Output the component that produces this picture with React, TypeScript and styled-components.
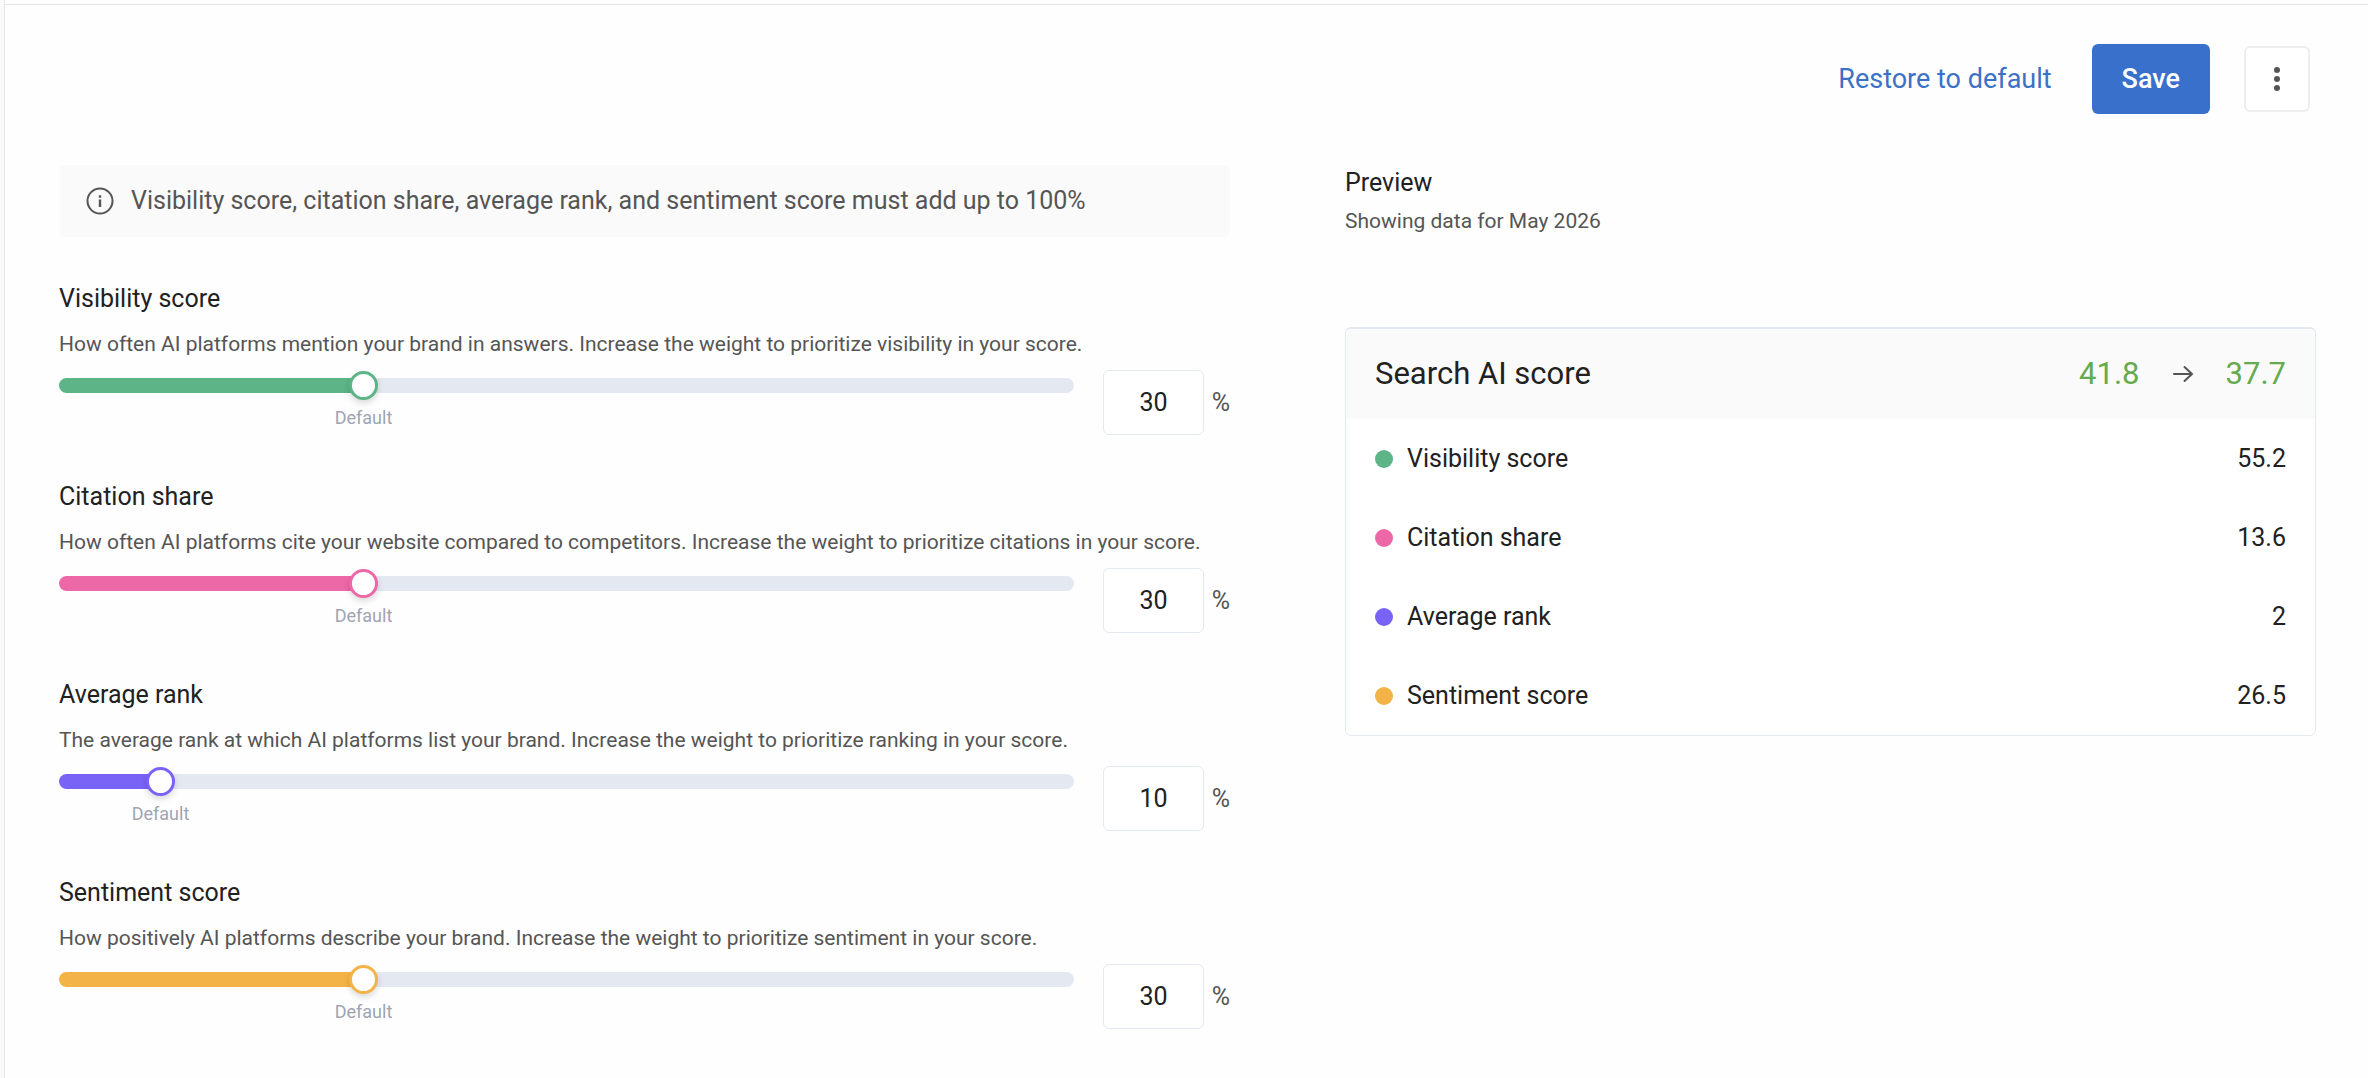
import React, { useState } from "react";
import styled, { createGlobalStyle } from "styled-components";

const GlobalStyle = createGlobalStyle`
  * { box-sizing: border-box; }
  body {
    margin: 0;
    background: #fefefe;
    color: #212121;
    font-family: Roboto, "Liberation Sans", sans-serif;
    font-size: 25px;
    line-height: 32px;
  }
  h1, h2, p, dl, dt, dd { margin: 0; font-weight: 400; }
  button, input { font: inherit; }
`;

const Page = styled.div`
  display: flex;
  flex-direction: column;
  min-height: 100vh;
  border-left: 4px solid #fafafa;
`;

const TopEdge = styled.div`
  height: 5px;
  border-left: 1px solid #e5e5e5;
  border-bottom: 1px solid #e5e5e5;
`;

const Main = styled.main`
  flex: 1;
  border-left: 1px solid #e5e5e5;
  padding: 39px 52px 24px 54px;
`;

const Toolbar = styled.div`
  display: flex;
  align-items: center;
  justify-content: flex-end;
  margin-bottom: 51px;
  padding-right: 6px;
`;

const TextButton = styled.button`
  margin-right: 40px;
  padding: 0;
  border: 0;
  background: none;
  color: #3b71c6;
  font-size: 27px;
  cursor: pointer;
`;

const SaveButton = styled.button`
  height: 70px;
  margin-right: 34px;
  padding: 0 30px;
  border: 0;
  border-radius: 6px;
  background: #3870cb;
  color: #fff;
  font-size: 27px;
  font-weight: 500;
  cursor: pointer;
`;

const MoreButton = styled.button`
  display: grid;
  place-items: center;
  width: 66px;
  height: 66px;
  padding: 0;
  border: 2px solid #eeeeee;
  border-radius: 6px;
  background: #fff;
  cursor: pointer;
`;

const Columns = styled.div`
  display: grid;
  grid-template-columns: 1171fr 971fr;
  gap: 115px;
  align-items: start;
`;

const Notice = styled.p`
  display: flex;
  align-items: center;
  gap: 17px;
  height: 72px;
  margin-bottom: 46px;
  padding: 0 27px;
  border-radius: 6px;
  background: #fafafa;
  color: #555;
`;

const WeightList = styled.div`
  display: grid;
  gap: 46px;
`;

const WeightTitle = styled.h2`
  font-size: 25px;
  line-height: 32px;
  margin-bottom: 15px;
`;

const Muted = styled.p`
  color: #555;
  font-size: 21px;
  line-height: 28px;
`;

const ControlRow = styled.div`
  display: flex;
  align-items: flex-start;
  margin-top: 12px;
`;

const SliderBox = styled.div`
  flex: 1;
  min-width: 0;
`;

const Track = styled.div<{ $color: string; $value: number }>`
  display: flex;
  align-items: center;
  height: 15px;
  margin: 8px 0;
  border-radius: 8px;
  background: linear-gradient(
    to right,
    ${(p) => p.$color} ${(p) => p.$value}%,
    #e4e8f1 ${(p) => p.$value}%
  );
`;

const Range = styled.input<{ $color: string }>`
  appearance: none;
  flex: none;
  width: calc(100% + 28px);
  height: 29px;
  margin: 0 -14px;
  background: transparent;
  cursor: pointer;

  &::-webkit-slider-thumb {
    appearance: none;
    box-sizing: border-box;
    width: 29px;
    height: 29px;
    border: 3px solid ${(p) => p.$color};
    border-radius: 50%;
    background: #fff;
    box-shadow: 0 3px 6px rgba(0, 0, 0, 0.15);
  }
`;

const DefaultMark = styled.div<{ $at: number }>`
  width: fit-content;
  margin-left: ${(p) => p.$at}%;
  transform: translateX(-50%);
  color: #9fa4b3;
  font-size: 18px;
  line-height: 34px;
`;

const NumberBox = styled.input`
  width: 101px;
  height: 65px;
  margin-left: 29px;
  padding: 0;
  border: 1px solid #e4e8f1;
  border-radius: 6px;
  background: #fff;
  color: #212121;
  font-size: 25px;
  text-align: center;
`;

const Percent = styled.span`
  width: 26px;
  color: #555;
  line-height: 65px;
  text-align: right;
`;

const PreviewTitle = styled.h2`
  font-size: 25px;
  line-height: 32px;
  margin: 2px 0 8px;
`;

const Card = styled.section`
  margin-top: 92px;
  border: 1px solid #e4e8f1;
  border-top-width: 2px;
  border-radius: 6px;
  overflow: hidden;
  background: #fff;
`;

const CardHeader = styled.div`
  display: flex;
  align-items: center;
  height: 90px;
  padding: 0 29px;
  background: #fafafa;
  font-size: 31px;
  line-height: 40px;
`;

const CardTitle = styled.h2`
  flex: 1;
  font-size: 31px;
`;

const Score = styled.span`
  color: #63ab4d;
`;

const ArrowIcon = styled.svg`
  margin: 0 32px;
`;

const ScoreRow = styled.div`
  display: flex;
  align-items: center;
  height: 79px;
  padding: 0 29px;
`;

const Dot = styled.span<{ $color: string }>`
  width: 18px;
  height: 18px;
  margin-right: 14px;
  border-radius: 50%;
  background: ${(p) => p.$color};
`;

const ScoreLabel = styled.dt`
  display: flex;
  align-items: center;
  flex: 1;
`;

const metrics = [
  {
    id: "visibility",
    name: "Visibility score",
    color: "#5cb487",
    weight: 30,
    score: "55.2",
    text: "How often AI platforms mention your brand in answers. Increase the weight to prioritize visibility in your score.",
  },
  {
    id: "citation",
    name: "Citation share",
    color: "#ed68a7",
    weight: 30,
    score: "13.6",
    text: "How often AI platforms cite your website compared to competitors. Increase the weight to prioritize citations in your score.",
  },
  {
    id: "rank",
    name: "Average rank",
    color: "#7963f7",
    weight: 10,
    score: "2",
    text: "The average rank at which AI platforms list your brand. Increase the weight to prioritize ranking in your score.",
  },
  {
    id: "sentiment",
    name: "Sentiment score",
    color: "#f4b346",
    weight: 30,
    score: "26.5",
    text: "How positively AI platforms describe your brand. Increase the weight to prioritize sentiment in your score.",
  },
];

type Metric = (typeof metrics)[number];

function WeightControl(props: {
  metric: Metric;
  value: number;
  onChange: (value: number) => void;
}) {
  const { metric, value, onChange } = props;
  const change = (e: React.ChangeEvent<HTMLInputElement>) =>
    onChange(Math.max(0, Math.min(100, Number(e.target.value) || 0)));
  return (
    <section>
      <WeightTitle id={`${metric.id}-title`}>{metric.name}</WeightTitle>
      <Muted id={`${metric.id}-text`}>{metric.text}</Muted>
      <ControlRow>
        <SliderBox>
          <Track $color={metric.color} $value={value}>
            <Range
              type="range"
              min={0}
              max={100}
              value={value}
              onChange={change}
              $color={metric.color}
              aria-labelledby={`${metric.id}-title`}
              aria-describedby={`${metric.id}-text`}
            />
          </Track>
          <DefaultMark $at={metric.weight}>Default</DefaultMark>
        </SliderBox>
        <NumberBox
          type="text"
          inputMode="numeric"
          value={value}
          onChange={change}
          aria-labelledby={`${metric.id}-title`}
        />
        <Percent>%</Percent>
      </ControlRow>
    </section>
  );
}

const defaults = metrics.map((m) => m.weight);

export default function App() {
  const [weights, setWeights] = useState(defaults);
  return (
    <Page>
      <GlobalStyle />
      <TopEdge />
      <Main>
        <Toolbar>
          <TextButton type="button" onClick={() => setWeights(defaults)}>
            Restore to default
          </TextButton>
          <SaveButton type="button">Save</SaveButton>
          <MoreButton type="button" aria-label="More options">
            <svg width="8" height="26" viewBox="0 0 8 26" fill="#555">
              <circle cx="4" cy="4" r="3" />
              <circle cx="4" cy="13" r="3" />
              <circle cx="4" cy="22" r="3" />
            </svg>
          </MoreButton>
        </Toolbar>
        <Columns>
          <div>
            <Notice>
              <svg width="28" height="28" viewBox="0 0 28 28" fill="none" stroke="#555" strokeWidth="2" aria-hidden="true">
                <circle cx="14" cy="14" r="12.5" />
                <path d="M14 12.500v7.500" strokeWidth="2.4" />
                <path d="M14 8.300v2.400" strokeWidth="2.4" />
              </svg>
              Visibility score, citation share, average rank, and sentiment score must add up to 100%
            </Notice>
            <WeightList>
              {metrics.map((metric, i) => (
                <WeightControl
                  key={metric.id}
                  metric={metric}
                  value={weights[i]}
                  onChange={(v) => setWeights(weights.map((w, j) => (j === i ? v : w)))}
                />
              ))}
            </WeightList>
          </div>
          <div>
            <PreviewTitle>Preview</PreviewTitle>
            <Muted>Showing data for May 2026</Muted>
            <Card>
              <CardHeader>
                <CardTitle>Search AI score</CardTitle>
                <Score>41.8</Score>
                <ArrowIcon width="22" height="18" viewBox="0 0 22 18" fill="none" stroke="#555" strokeWidth="2" strokeLinecap="round" role="img" aria-label="to">
                  <path d="M2 9h18M12.500 2l7.500 7-7.500 7" />
                </ArrowIcon>
                <Score>37.7</Score>
              </CardHeader>
              <dl>
                {metrics.map((metric) => (
                  <ScoreRow key={metric.id}>
                    <ScoreLabel>
                      <Dot $color={metric.color} />
                      {metric.name}
                    </ScoreLabel>
                    <dd>{metric.score}</dd>
                  </ScoreRow>
                ))}
              </dl>
            </Card>
          </div>
        </Columns>
      </Main>
    </Page>
  );
}
